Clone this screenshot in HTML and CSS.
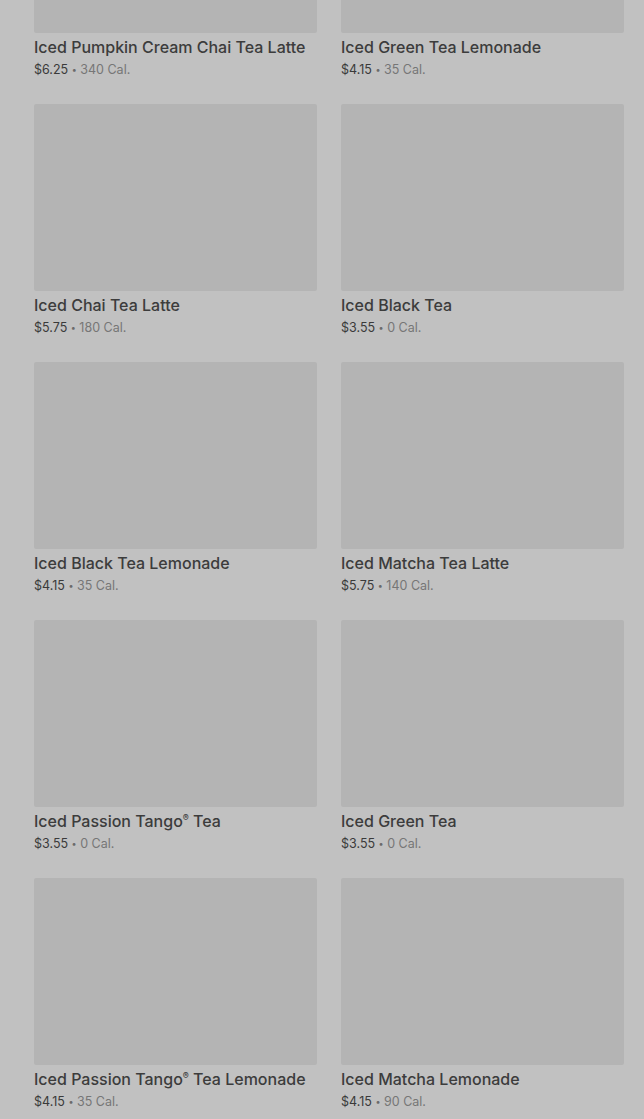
FILE: index.html
```html
<!DOCTYPE html>
<html>
<head>
	<title>iced tea</title>
	<meta charset="utf-8"/>
	<link rel="stylesheet" href="styles.css">
</head>
<body>

<div class="menu">
	<div class="item">
		<div class="pic"></div>
		<div class="info">
			<p class="name">Iced Pumpkin Cream Chai Tea Latte</p>
			<p class="meta"><span class="price">$6.25</span> <span class="dot">•</span> <span class="cal">340 Cal.</span></p>
		</div>
	</div>
	<div class="item">
		<div class="pic"></div>
		<div class="info">
			<p class="name">Iced Green Tea Lemonade</p>
			<p class="meta"><span class="price">$4.15</span> <span class="dot">•</span> <span class="cal">35 Cal.</span></p>
		</div>
	</div>
	<div class="item">
		<div class="pic"></div>
		<div class="info">
			<p class="name">Iced Chai Tea Latte</p>
			<p class="meta"><span class="price">$5.75</span> <span class="dot">•</span> <span class="cal">180 Cal.</span></p>
		</div>
	</div>
	<div class="item">
		<div class="pic"></div>
		<div class="info">
			<p class="name">Iced Black Tea</p>
			<p class="meta"><span class="price">$3.55</span> <span class="dot">•</span> <span class="cal">0 Cal.</span></p>
		</div>
	</div>
	<div class="item">
		<div class="pic"></div>
		<div class="info">
			<p class="name">Iced Black Tea Lemonade</p>
			<p class="meta"><span class="price">$4.15</span> <span class="dot">•</span> <span class="cal">35 Cal.</span></p>
		</div>
	</div>
	<div class="item">
		<div class="pic"></div>
		<div class="info">
			<p class="name">Iced Matcha Tea Latte</p>
			<p class="meta"><span class="price">$5.75</span> <span class="dot">•</span> <span class="cal">140 Cal.</span></p>
		</div>
	</div>
	<div class="item">
		<div class="pic"></div>
		<div class="info">
			<p class="name">Iced Passion Tango<sup>®</sup> Tea</p>
			<p class="meta"><span class="price">$3.55</span> <span class="dot">•</span> <span class="cal">0 Cal.</span></p>
		</div>
	</div>
	<div class="item">
		<div class="pic"></div>
		<div class="info">
			<p class="name">Iced Green Tea</p>
			<p class="meta"><span class="price">$3.55</span> <span class="dot">•</span> <span class="cal">0 Cal.</span></p>
		</div>
	</div>
	<div class="item">
		<div class="pic"></div>
		<div class="info">
			<p class="name">Iced Passion Tango<sup>®</sup> Tea Lemonade</p>
			<p class="meta"><span class="price">$4.15</span> <span class="dot">•</span> <span class="cal">35 Cal.</span></p>
		</div>
	</div>
	<div class="item">
		<div class="pic"></div>
		<div class="info">
			<p class="name">Iced Matcha Lemonade</p>
			<p class="meta"><span class="price">$4.15</span> <span class="dot">•</span> <span class="cal">90 Cal.</span></p>
		</div>
	</div>
</div>

</body>
</html>
```

FILE: styles.css
```css
* {
	margin: 0px;
	padding: 0px;
}

body {
	background-color: #c1c1c1;
	font-family: Inter, "Liberation Sans", sans-serif;
	overflow: hidden;
}

.menu {
	display: grid;
	grid-template-columns: 283px 283px;
	column-gap: 24px;
	row-gap: 25px;
	margin-top: -154px;
	padding-left: 34px;
}
	.item .pic {
		height: 187px;
		background-color: #b4b4b4;
		border-radius: 2px;
	}
	.item .info {
		padding-top: 4px;
	}
		.name {
			font-size: 16px;
			font-weight: 500;
			line-height: 20px;
			color: #3c3c3c;
			white-space: nowrap;
		}
			.name sup {
				font-size: 9px;
				line-height: 0;
				vertical-align: 6px;
			}
		.meta {
			margin-top: 4px;
			font-size: 12.5px;
			line-height: 18px;
			color: #6e6e6e;
		}
			.price {
				color: #3a3a3a;
			}
			.dot {
				font-size: 9px;
				vertical-align: 1px;
				color: #6a6a6a;
			}
			.cal {
				color: #767676;
			}
```
